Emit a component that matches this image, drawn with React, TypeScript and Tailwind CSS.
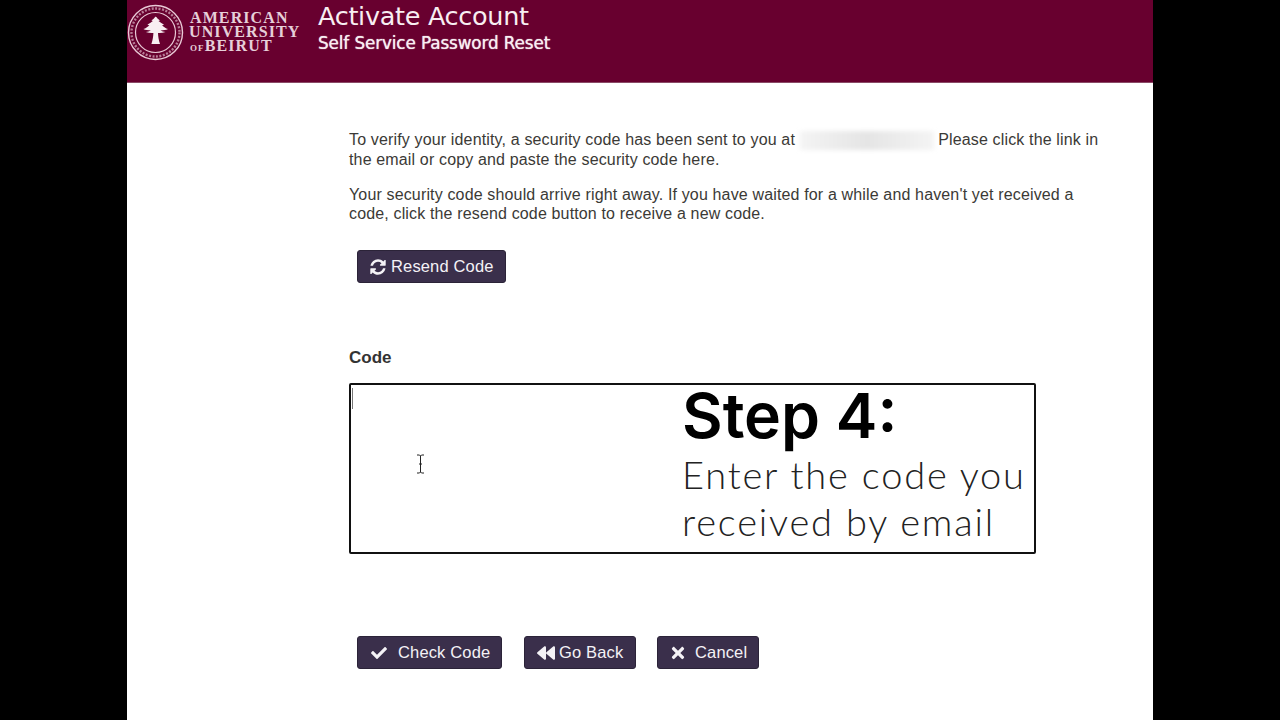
import React from "react";
import { FaCheck, FaBackward, FaTimes } from "react-icons/fa";

function Refresh() {
  return (
    <svg viewBox="0 0 1792 1792" width="18" height="18" fill="currentColor" className="shrink-0">
      <path d="M1639 1056q0 5-1 7-64 268-268 434.500t-478 166.500q-146 0-282.500-55t-243.500-157l-129 129q-19 19-45 19t-45-19-19-45v-448q0-26 19-45t45-19h448q26 0 45 19t19 45-19 45l-137 137q71 66 161 102t187 36q134 0 250-65t186-179q11-17 53-117 8-23 30-23h192q13 0 22.500 9.500t9.500 22.500zm25-800v448q0 26-19 45t-45 19h-448q-26 0-45-19t-19-45 19-45l138-138q-148-137-349-137-134 0-250 65t-186 179q-11 17-53 117-8 23-30 23h-199q-13 0-22.500-9.500t-9.500-22.500v-7q65-268 270-434.500t480-166.500q146 0 284 55.500t245 156.500l130-129q19-19 45-19t45 19 19 45z" />
    </svg>
  );
}

function Logo() {
  return (
    <div className="flex items-center w-[172px] h-[60px] gap-[5px] mt-[2px]">
      <svg width="57" height="57" viewBox="0 0 57 57" className="shrink-0">
        <circle cx="28.5" cy="28.5" r="27" fill="none" stroke="#e9c9d6" strokeWidth="1.4" />
        <circle cx="28.5" cy="28.5" r="24" fill="none" stroke="#b87d97" strokeWidth="2.4" strokeDasharray="2 1.5" />
        <circle cx="28.5" cy="28.5" r="20" fill="none" stroke="#e9c9d6" strokeWidth="1.2" />
        <path
          d="M28.5 12c1.500 2 3 3.500 4.500 4.500l-1.500.6c2 1.500 3.500 2.600 5.500 3.700l-2 .6c2 1.600 3.500 2.700 6 3.700-2 1-4.500 1.300-7.500 1.300 1.500.8 3 1.300 5 1.600-2.500 1-5 1.200-7.500 1 .2 3.500.6 7 2 11h-8.600c1.400-4 1.800-7.500 2-11-2.500.2-5 0-7.500-1 2-.3 3.500-.8 5-1.600-3 0-5.500-.3-7.500-1.300 2.500-1 4-2.100 6-3.700l-2-.6c2-1.100 3.500-2.200 5.500-3.700l-1.500-.6c1.500-1 3-2.500 4.500-4.500z"
          fill="#f8eef2"
        />
      </svg>
      <div className="flex flex-col font-['Liberation_Serif',serif] font-bold text-[#e6cfd9] text-[16px] leading-[14px] tracking-[1.1px] whitespace-nowrap mt-[2px]">
        <span className="pl-[1px]">AMERICAN</span>
        <span>UNIVERSITY</span>
        <span className="flex items-baseline pl-[1px]">
          <span className="text-[9px]">OF</span>
          <span>BEIRUT</span>
        </span>
      </div>
    </div>
  );
}

function Btn({ icon, label, className }: { icon: React.ReactNode; label: string; className: string }) {
  return (
    <button className={`flex items-center h-[33px] rounded-[3px] bg-[#3a2f4b] border border-[#2b2338] text-[#f4f2f6] text-[16.5px] tracking-[0.15px] ${className}`}>
      {icon}
      <span>{label}</span>
    </button>
  );
}

export default function App() {
  return (
    <div className="w-[1280px] h-[720px] bg-black overflow-hidden font-['Liberation_Sans',Arial,sans-serif]">
      <div className="w-[1026px] h-full ml-[127px] bg-white flex flex-col">
        <header className="h-[83px] shrink-0 bg-[#68002f] flex items-start border-b border-[#8a4a66]">
          <Logo />
          <div className="ml-[19px] flex flex-col font-['DejaVu_Sans',sans-serif] text-[#f8eef2] whitespace-nowrap">
            <span className="text-[25.5px] leading-[32px] tracking-[-0.3px]">Activate Account</span>
            <span className="text-[16.8px] leading-[22px] tracking-[-0.1px] [text-shadow:0_0_1px_#f8eef2]">Self Service Password Reset</span>
          </div>
        </header>
        <main className="pl-[222px] pr-[54px] flex flex-col flex-1 text-[#3b3a36] text-[16px] leading-[19px] tracking-[0.15px]">
          <p className="mt-[47px] w-[750px]">
            To verify your identity, a security code has been sent to you at{" "}
            <span className="inline-block align-middle w-[134px] h-[19px] bg-gradient-to-r from-[#f4f4f4] via-[#e5e5e5] to-[#f4f4f4] blur-[2px]" />{" "}
            Please click the link in the email or copy and paste the security code here.
          </p>
          <p className="mt-[16px] w-[750px]">
            Your security code should arrive right away. If you have waited for a while and haven't yet received a code, click the resend code button to receive a new code.
          </p>
          <div className="mt-[27px] ml-[8px]">
            <Btn
              className="w-[149px] pl-[11px] gap-[4px]"
              icon={<Refresh />}
              label="Resend Code"
            />
          </div>
          <label className="mt-[65px] font-bold text-[17px] tracking-normal leading-[20px] text-[#333]">Code</label>
          <div className="relative mt-[15px] w-[687px] h-[171px] border-2 border-[#111] rounded-[2px] bg-white flex">
            <div className="w-[1px] h-[21px] bg-[#777] mt-[3px] ml-[1px]" />
            <div className="ml-[329px] flex flex-col text-black">
              <span className="font-['Inter',sans-serif] font-semibold text-[62.5px] leading-[64px] mt-[-2px] tracking-normal whitespace-nowrap">Step 4:</span>
              <span className="font-['Lato',sans-serif] font-light text-[38px] leading-[47px] mt-[4px] tracking-[1.8px] text-[#222] whitespace-nowrap">Enter the code you<br />received by email</span>
            </div>
            <svg width="9" height="20" viewBox="0 0 9 20" className="absolute left-[65px] top-[69px]">
              <path d="M1 1h2.500l1 1 1-1H8M4.500 2v16M1 19h2.500l1-1 1 1H8M3 10h3" fill="none" stroke="#222" strokeWidth="1" />
            </svg>
          </div>
          <div className="mt-[82px] ml-[8px] flex">
            <Btn
              className="w-[145px] pl-[13px] gap-[11px]"
              icon={<FaCheck className="w-[16px] h-[16px]" />}
              label="Check Code"
            />
            <Btn
              className="w-[112px] pl-[12px] gap-[4px] ml-[22px]"
              icon={<FaBackward className="w-[18px] h-[18px]" />}
              label="Go Back"
            />
            <Btn
              className="w-[102px] pl-[11px] gap-[8px] ml-[21px]"
              icon={<FaTimes className="w-[18px] h-[18px]" />}
              label="Cancel"
            />
          </div>
        </main>
      </div>
    </div>
  );
}
